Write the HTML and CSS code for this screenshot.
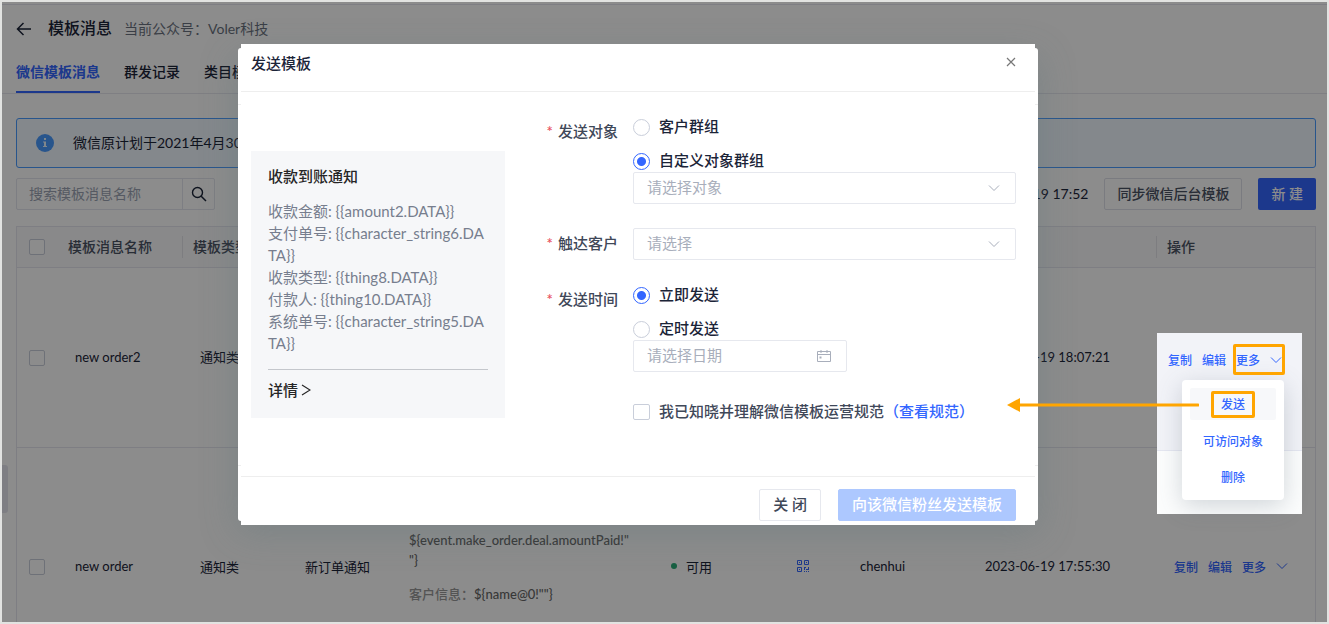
FILE: index.html
```html
<!DOCTYPE html>
<html lang="zh-CN">
<head>
<meta charset="utf-8">
<title>模板消息</title>
<link rel="stylesheet" href="styles.css">
</head>
<body>
<div class="app">
  <header class="page-head">
    <button class="back" aria-label="返回"><svg width="16" height="16" viewBox="0 0 16 16"><path d="M15 8H2M7.500 2L1.500 8l6 6" fill="none" stroke="currentColor" stroke-width="1.500"/></svg></button>
    <h1>模板消息</h1>
    <span class="account">当前公众号：Voler科技</span>
  </header>
  <nav class="tabs">
    <a href="#wx" class="tab tab-active">微信模板消息</a>
    <a href="#log" class="tab">群发记录</a>
    <a href="#cat" class="tab">类目模板</a>
  </nav>
  <main class="content">
    <div class="notice">
      <svg width="18" height="18" viewBox="0 0 18 18"><circle cx="9" cy="9" r="9" fill="#4a9bff"/><path d="M8 4h2v2H8zM7 7.500h3V12h1v1H7v-1h1V8.500H7z" fill="#e6f4ff"/></svg>
      <span>微信原计划于2021年4月30日</span>
    </div>
    <div class="toolbar">
      <div class="search">
        <input type="text" placeholder="搜索模板消息名称" aria-label="搜索模板消息名称">
        <button aria-label="搜索"><svg width="16" height="16" viewBox="0 0 16 16"><circle cx="6.500" cy="6.500" r="5" fill="none" stroke="currentColor" stroke-width="1.400"/><path d="M10.200 10.200L15 15" stroke="currentColor" stroke-width="1.500"/></svg></button>
      </div>
      <span class="synced">2023-06-19 17:52</span>
      <button class="btn btn-sync">同步微信后台模板</button>
      <button class="btn btn-new">新 建</button>
    </div>
    <table class="grid">
      <colgroup><col class="c-check"><col class="c-name"><col class="c-type"><col class="c-title"><col><col class="c-state"><col class="c-qr"><col class="c-user"><col class="c-date"><col class="c-ops"></colgroup>
      <thead>
        <tr><th><input type="checkbox" class="check" aria-label="全选"></th><th class="sep">模板消息名称</th><th>模板类型</th><th></th><th></th><th></th><th></th><th></th><th class="sep"></th><th>操作</th></tr>
      </thead>
      <tbody>
        <tr class="row-a"><td><input type="checkbox" class="check" aria-label="new order2"></td><td>new order2</td><td>通知类</td><td></td><td></td><td></td><td></td><td></td><td>2023-06-19 18:07:21</td><td></td></tr>
        <tr class="row-b">
          <td><input type="checkbox" class="check" aria-label="new order"></td><td>new order</td><td>通知类</td><td>新订单通知</td>
          <td class="body-cell"><p>${event.make_order.deal.amountPaid!"<br>"}</p><p><span class="key">客户信息：</span>${name@0!""}</p><p>${event.order.name!""}</p></td>
          <td><span class="state">可用</span></td>
          <td><svg class="qr" width="12" height="12" viewBox="0 0 12 12" fill="none" stroke="currentColor"><path d="M.5.5h4v4h-4zM7.500.5h4v4h-4zM.5 7.500h4v4h-4z"/><path d="M2 2.500h1M9 2.500h1M2 9.500h1M7 7.500h2M11 7.500h1M7.500 8v2M7 11.500h1M9 9.500h3M9 11.500h1M11 11.500h1M11.500 7v3"/></svg></td>
          <td>chenhui</td><td>2023-06-19 17:55:30</td>
          <td><span class="ops"><a href="#copy">复制</a><a href="#edit">编辑</a><a href="#more">更多</a><svg width="12" height="8" viewBox="0 0 12 8"><path d="M1 1.500l5 5 5-5" fill="none" stroke="currentColor"/></svg></span></td>
        </tr>
      </tbody>
    </table>
  </main>
  <span class="handle"></span>
  <div class="mask"></div>

  <section class="modal" role="dialog" aria-label="发送模板">
    <div class="modal-head"><h2>发送模板</h2><button aria-label="关闭窗口"><svg width="10" height="10" viewBox="0 0 10 10"><path d="M1 1l8 8M9 1L1 9" stroke="currentColor" stroke-width="1.200"/></svg></button></div>
    <div class="modal-body">
      <aside class="card">
        <h3>收款到账通知</h3>
        <ul>
          <li>收款金额: {{amount2.DATA}}</li>
          <li>支付单号: {{character_string6.DA<wbr>TA}}</li>
          <li>收款类型: {{thing8.DATA}}</li>
          <li>付款人: {{thing10.DATA}}</li>
          <li>系统单号: {{character_string5.DA<wbr>TA}}</li>
        </ul>
        <a class="detail" href="#detail">详情<svg width="10" height="12" viewBox="0 0 10 12"><path d="M1 1l8 5-8 5" fill="none" stroke="currentColor" stroke-width="1.200"/></svg></a>
      </aside>
      <form class="form">
        <span class="label">发送对象</span>
        <div class="field">
          <label class="opt"><input type="radio" name="target" class="radio"><span>客户群组</span></label>
          <label class="opt"><input type="radio" name="target" class="radio" checked><span>自定义对象群组</span></label>
          <div class="picker"><select aria-label="自定义对象"><option>请选择对象</option></select><svg width="12" height="8" viewBox="0 0 12 8"><path d="M1 1.500l5 5 5-5" fill="none" stroke="currentColor"/></svg></div>
        </div>
        <label class="label" for="reach">触达客户</label>
        <div class="picker"><select id="reach"><option>请选择</option></select><svg width="12" height="8" viewBox="0 0 12 8"><path d="M1 1.500l5 5 5-5" fill="none" stroke="currentColor"/></svg></div>
        <span class="label">发送时间</span>
        <div class="field">
          <label class="opt"><input type="radio" name="time" class="radio" checked><span>立即发送</span></label>
          <label class="opt"><input type="radio" name="time" class="radio"><span>定时发送</span></label>
          <div class="picker date"><input type="text" placeholder="请选择日期" aria-label="发送日期"><svg width="14" height="12" viewBox="0 0 14 12"><path d="M.5 1.500h13v10H.5zM.5 4.500h13M4 0v3M10 0v3" fill="none" stroke="currentColor"/><path d="M2.500 6.500h2v2h-2z" fill="currentColor"/></svg></div>
        </div>
        <div class="agree"><label class="opt"><input type="checkbox" class="check"><span>我已知晓并理解微信模板运营规范</span></label><a href="#rules">（查看规范）</a></div>
      </form>
    </div>
    <div class="modal-foot"><button class="btn-close">关 闭</button><button class="btn-send">向该微信粉丝发送模板</button></div>
  </section>

  <div class="callout">
    <div class="callout-row"><a href="#copy2">复制</a><a href="#edit2">编辑</a><button class="ring more">更多<svg width="12" height="8" viewBox="0 0 12 8"><path d="M1 1.500l5 5 5-5" fill="none" stroke="currentColor"/></svg></button></div>
    <ul class="menu">
      <li class="current"><a href="#send" class="ring">发送</a></li>
      <li><a href="#access">可访问对象</a></li>
      <li><a href="#delete">删除</a></li>
    </ul>
    <svg class="arrow" width="192" height="14" viewBox="0 0 192 14"><path d="M0 7L13 0v14z" fill="#ffa500"/><path d="M12 7h179" stroke="#ffa500" stroke-width="3" stroke-linecap="round"/></svg>
  </div>
</div>
</body>
</html>
```
FILE: styles.css
```css
* { box-sizing: border-box; }
body {
  margin: 0;
  padding: 2px;
  background: #e2e3e1;
  font-family: Lato, "Noto Sans CJK SC", sans-serif;
  font-size: 14px;
  color: #1b2438;
}
h1, h2, h3, p, ul { margin: 0; padding: 0; font-weight: 500; }
ul { list-style: none; }
a { color: #36f; text-decoration: none; }
button, input, select { font: inherit; color: inherit; margin: 0; }
button { background: none; border: 0; padding: 0; white-space: nowrap; cursor: pointer; }
svg { display: block; flex: none; }

.app {
  position: relative;
  height: calc(100vh - 4px);
  overflow: hidden;
  background: #fff;
}
.mask { position: absolute; inset: 0; background: rgba(0, 0, 0, .45); }

.page-head {
  display: flex;
  align-items: center;
  height: 52px;
  margin-top: 2px;
  padding: 0 14px 6px;
  border-top: 1px solid #e6e6ee;
}
.back { padding-top: 2px; }
.page-head h1 { margin: 0 12px 0 16px; font-size: 16px; line-height: 24px; }
.account { color: #6b7280; }

.tabs {
  display: flex;
  gap: 24px;
  height: 38px;
  padding: 0 14px;
  border-bottom: 1px solid #e8e8ee;
}
.tab { height: 37px; line-height: 32px; font-weight: 500; color: #1b2438; }
.tab-active { color: #36f; font-weight: 700; border-bottom: 2px solid #36f; }

.content { padding: 24px 11px 0 14px; }
.notice {
  display: flex;
  align-items: center;
  gap: 19px;
  height: 50px;
  padding: 0 19px;
  border: 1px solid #4a9bff;
  border-radius: 3px;
  background: #f0f8ff;
}
.notice span { padding-bottom: 2px; }
.toolbar { display: flex; align-items: center; height: 32px; margin: 10px 0 16px; }
.search { display: flex; width: 199px; height: 32px; border: 1px solid #e3e5ee; border-radius: 2px; }
.search input { flex: 1; min-width: 0; padding: 0 12px 2px; border: 0; background: none; }
.search input::placeholder { color: #9ba3b3; opacity: 1; }
.search button { display: grid; place-items: center; width: 32px; border-left: 1px solid #e3e5ee; }
.synced { margin-left: auto; padding-bottom: 2px; }
.btn { height: 32px; border-radius: 2px; }
.btn-sync { margin: 0 16px; padding: 0 12px 2px; border: 1px solid #dfe1ea; font-weight: 500; color: #4a5263; }
.btn-new { padding: 0 13px 2px; background: #36f; color: #fff; font-weight: 500; }

.grid {
  width: 100%;
  table-layout: fixed;
  border-collapse: separate;
  border-spacing: 0;
  border: 1px solid #e6e6ee;
}
.c-check { width: 41px; }
.c-name, .c-user { width: 125px; }
.c-type { width: 105px; }
.c-title { width: 104px; }
.c-state { width: 126px; }
.c-qr { width: 63px; }
.c-date { width: 189px; }
.c-ops { width: 158px; }
.grid th {
  height: 41px;
  padding: 0 10px 3px;
  border-bottom: 1px solid #e6e6ee;
  background: #f9f9fb;
  font-weight: 500;
  color: #4a5263;
  text-align: left;
  white-space: nowrap;
}
.grid .sep { background: linear-gradient(#e3e3e9, #e3e3e9) right center / 1px 22px no-repeat #f9f9fb; }
.grid td { padding: 0 0 2px 17px; border-bottom: 1px solid #e6e6ee; font-size: 13px; white-space: nowrap; }
.grid th:first-child, .grid td:first-child { padding: 0 0 0 12px; }
.row-a td { height: 180px; }
.row-b td { height: 239px; }
.grid .body-cell { padding-top: 82px; vertical-align: top; line-height: 20px; color: #666; }
.body-cell p { margin-bottom: 14px; }
.body-cell .key { color: #999; }
.state { display: flex; align-items: center; gap: 9px; }
.state::before { content: ""; width: 6px; height: 6px; border-radius: 50%; background: #2cad78; }
.qr { color: #36f; }
.ops { display: flex; align-items: center; gap: 10px; font-size: 12px; color: #36f; font-weight: 500; }
.handle { position: absolute; left: 0; top: 463px; width: 6px; height: 48px; border-radius: 0 3px 3px 0; background: #e6e6ee; }

.check, .radio {
  appearance: none;
  display: block;
  flex: none;
  width: 16px;
  height: 16px;
  border: 1px solid #c9ceda;
  border-radius: 2px;
  background: #fff;
}
.radio { width: 17px; height: 17px; border-radius: 50%; }
.radio:checked { border-color: #36f; background: radial-gradient(circle, #36f 4px, #fff 5px); }

.modal {
  position: absolute;
  z-index: 1;
  left: 239px;
  top: 42px;
  width: 794px;
  font-size: 15px;
  font-weight: 500;
}
.modal::before, .modal::after { content: ""; position: absolute; z-index: -1; background: #fff; }
.modal::before {
  inset: 4px -3px;
  border-radius: 3px;
  background: linear-gradient(#eee, #eee) 0 56px / 100% 1px no-repeat, linear-gradient(#eee, #eee) 0 417px / 100% 1px no-repeat, #fff;
  box-shadow: 0 10px 36px rgba(90, 115, 120, .35);
}
.modal::after { inset: 0; }
.modal-head {
  display: flex;
  align-items: center;
  justify-content: space-between;
  height: 48px;
  padding: 0 19px 11px 10px;
  border-bottom: 1px solid #eee;
}
.modal-head h2 { font-size: 15px; }
.modal-head button { color: #777; }
.modal-body { display: flex; align-items: flex-start; padding: 24px 19px 48px 10px; }
.card { width: 254px; margin: 35px 40px 0 0; padding: 14px 17px 17px; background: #f6f7f9; color: #777e8e; }
.card h3 { margin-bottom: 13px; font-size: 15px; line-height: 22px; color: #262626; }
.card ul { padding-bottom: 15px; border-bottom: 1px solid #c4c7cc; font-weight: 400; line-height: 22px; }
.detail { display: flex; align-items: center; gap: 3px; margin-top: 9px; line-height: 22px; color: #262626; }
.form { flex: 1; display: grid; grid-template-columns: 73px 1fr; column-gap: 15px; row-gap: 24px; }
.label { line-height: 30px; text-align: right; color: #3f4859; white-space: nowrap; }
.label::before { content: "*"; margin-right: 5px; color: #e8505b; }
.field { display: flex; flex-direction: column; }
.opt { display: flex; align-items: center; gap: 9px; height: 22px; margin-bottom: 12px; }
.opt + .opt { margin-bottom: 0; }
.opt span, .agree a { padding-bottom: 3px; }
.picker { position: relative; height: 32px; color: #a8aebb; font-weight: 400; }
.picker select, .picker input {
  appearance: none;
  display: block;
  width: 100%;
  height: 32px;
  padding: 0 13px 2px;
  border: 1px solid #e6e8ee;
  border-radius: 2px;
  background: #fff;
}
.picker input::placeholder { color: #a8aebb; opacity: 1; }
.picker svg { position: absolute; right: 16px; top: 12px; }
.picker.date { width: 214px; }
.picker.date svg { top: 10px; }
.agree { grid-column: 2; display: flex; align-items: center; height: 32px; white-space: nowrap; color: #3f4859; }
.agree .opt { margin: 0; }
.agree .check { width: 17px; }
.modal-foot { display: flex; justify-content: flex-end; gap: 17px; padding: 12px 19px 4px; border-top: 1px solid #eee; }
.modal-foot button { height: 32px; padding: 0 13px 3px; border: 1px solid #e6e8ee; border-radius: 2px; font-weight: 500; color: #3f4859; }
.modal-foot .btn-send { border-color: #adc8ff; background: #adc8ff; color: #fff; }

.callout {
  position: absolute;
  z-index: 2;
  right: 25px;
  top: 331px;
  width: 145px;
  height: 181px;
  background: linear-gradient(#f2f3f8 117px, #e5e7f1 117px, #e5e7f1 118px, #fcfdfd 118px);
  font-size: 12px;
  font-weight: 500;
}
.callout-row { display: flex; align-items: center; gap: 10px; height: 53px; padding-left: 11px; }
.ring { border: 3px solid #ffa500; border-radius: 2px; color: #36f; }
.more { display: flex; align-items: center; gap: 10px; width: 52px; height: 31px; margin-left: -3px; font-weight: 500; }
.menu {
  display: flex;
  flex-direction: column;
  gap: 4px;
  width: 102px;
  margin: -6px 0 0 25px;
  padding: 8px;
  border-radius: 4px;
  background: #fff;
  box-shadow: 0 6px 24px rgba(80, 95, 110, .25);
}
.menu li { display: grid; place-items: center; height: 32px; }
.menu .current { background: #f7f8fa; border-radius: 2px; }
.menu .ring { padding: 0 7px; line-height: 21px; }
.arrow { position: absolute; right: 103px; top: 65px; }
```
